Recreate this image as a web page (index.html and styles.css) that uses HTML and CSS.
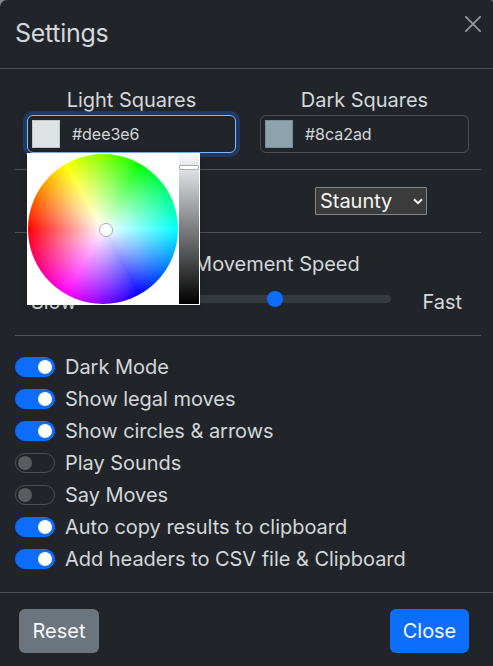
FILE: index.html
```
<!DOCTYPE html>
<html lang="en">
<head>
<meta charset="utf-8">
<title>Settings</title>
<link rel="stylesheet" href="styles.css">
</head>
<body>
<div class="modal">
  <header class="modal-header">
    <h5 class="modal-title">Settings</h5>
    <button class="btn-close" aria-label="Close">
      <svg viewBox="0 0 16 16" width="16" height="16"><path d="M.9.9l14.2 14.2M15.1.9L.9 15.1" fill="none" stroke="currentColor" stroke-width="1.8" stroke-linecap="round"/></svg>
    </button>
  </header>
  <main class="modal-body">
    <div class="colors">
      <div class="color-field">
        <label>Light Squares</label>
        <div class="color-input focused"><span class="swatch light"></span><span class="hex">#dee3e6</span></div>
        <div class="picker">
          <div class="wheel"><span class="cursor"></span></div>
          <div class="shade"><span class="handle"></span></div>
        </div>
      </div>
      <div class="color-field">
        <label>Dark Squares</label>
        <div class="color-input"><span class="swatch dark"></span><span class="hex">#8ca2ad</span></div>
      </div>
    </div>
    <hr>
    <div class="piece-row">
      <div class="select"><span>Staunty</span>
        <svg viewBox="0 0 10 7" width="10" height="7"><path d="M1 1.2l4 4 4-4" fill="none" stroke="currentColor" stroke-width="2"/></svg>
      </div>
    </div>
    <hr>
    <div class="speed-title">Piece Movement Speed</div>
    <div class="speed-row">
      <span class="slow">Slow</span>
      <div class="range"><span class="thumb"></span></div>
      <span class="fast">Fast</span>
    </div>
    <hr>
    <div class="switches">
      <label class="switch-row"><span class="switch on"></span><span>Dark Mode</span></label>
      <label class="switch-row"><span class="switch on"></span><span>Show legal moves</span></label>
      <label class="switch-row"><span class="switch on"></span><span>Show circles &amp; arrows</span></label>
      <label class="switch-row"><span class="switch"></span><span>Play Sounds</span></label>
      <label class="switch-row"><span class="switch"></span><span>Say Moves</span></label>
      <label class="switch-row"><span class="switch on"></span><span>Auto copy results to clipboard</span></label>
      <label class="switch-row"><span class="switch on"></span><span>Add headers to CSV file &amp; Clipboard</span></label>
    </div>
  </main>
  <footer class="modal-footer">
    <button class="btn secondary">Reset</button>
    <button class="btn primary">Close</button>
  </footer>
</div>
</body>
</html>
```
FILE: styles.css
```
* { box-sizing: border-box; }
body {
  margin: 0;
  background: #85888a;
  color: #d3d7db;
  font: 400 20px/30px Inter, "Liberation Sans", sans-serif;
  letter-spacing: -.03px;
}
.modal {
  display: flex;
  flex-direction: column;
  width: 493px;
  height: 666px;
  background: #212529;
  border-radius: 7px 3px 0 0;
  overflow: hidden;
}
.modal-header {
  display: flex;
  justify-content: space-between;
  height: 69px;
  padding: 15px 12px 0 15px;
  border-bottom: 1px solid #495057;
}
.modal-title { margin: 0; font-size: 25px; font-weight: 400; line-height: 37px; letter-spacing: -.3px; }
.btn-close { display: flex; height: 16px; margin: 1px 0 0; padding: 0; border: 0; background: none; color: #96989a; }
.modal-body { flex: 1; padding: 16px 12px 0 15px; }
hr { height: 1px; margin: 0; border: 0; background: #4f5357; }
.colors { display: flex; gap: 24px; height: 84px; padding-left: 12px; }
.color-field { position: relative; width: 209px; text-align: center; }
.color-field label { display: block; }
.color-input {
  display: flex;
  align-items: center;
  gap: 12px;
  height: 38px;
  padding-left: 4px;
  border: 1px solid #495057;
  border-radius: 6px;
  font-size: 16px;
}
.color-input.focused { border-color: #86b7fe; box-shadow: 0 0 0 4px #1d3a67; }
.swatch { width: 28px; height: 28px; border: 1px solid rgba(0, 0, 0, .12); }
.swatch.light { background: #dee3e6; }
.swatch.dark { background: #8ca2ad; }
.picker {
  position: absolute;
  z-index: 2;
  top: 68px;
  left: 0;
  display: flex;
  gap: 1px;
  width: 173px;
  height: 152px;
  padding: 1px;
  background: #fff;
  box-shadow: 0 0 8px rgba(0, 0, 0, .2);
}
.wheel {
  position: relative;
  width: 150px;
  height: 150px;
  border-radius: 50%;
  background: radial-gradient(circle closest-side, #fff, rgba(255, 255, 255, 0)),
    conic-gradient(from 270deg, #f00, #ff0, #0f0, #0ff, #00f, #f0f, #f00);
}
.cursor {
  position: absolute;
  left: 71px;
  top: 69px;
  width: 14px;
  height: 14px;
  border: 1px solid #aaa;
  border-radius: 50%;
  background: #f6fbff;
  box-shadow: inset 0 0 0 2px #fff;
}
.shade { position: relative; width: 20px; background: linear-gradient(#f6fbff, #000); }
.handle {
  position: absolute;
  top: 11px;
  left: 0;
  width: 20px;
  height: 5px;
  border: 1px solid #aaa;
  border-radius: 2px;
  background: #fff;
}
.piece-row { height: 62px; padding: 17px 0 0 300px; }
.select {
  display: flex;
  align-items: center;
  justify-content: space-between;
  width: 112px;
  height: 28px;
  padding: 0 3px 0 4px;
  border: 1px solid #858585;
  border-radius: 1px;
  background: #3b3b3b;
  color: #f4f4f4;
}
.speed-title { padding-top: 16px; text-align: center; }
.speed-row { display: flex; height: 56px; padding: 8px 19px 0 16px; }
.slow { width: 90px; }
.range { position: relative; flex: none; width: 270px; height: 8px; margin-top: 8px; border-radius: 4px; background: #343a40; }
.thumb { position: absolute; left: 146px; top: -4px; width: 16px; height: 16px; border-radius: 50%; background: #0d6efd; }
.fast { margin-left: auto; }
.switches { padding-top: 15px; }
.switch-row { display: flex; align-items: center; gap: 10px; height: 32px; white-space: nowrap; }
.switch {
  display: flex;
  align-items: center;
  width: 40px;
  height: 20px;
  padding: 0 2px;
  border: 1px solid #495057;
  border-radius: 10px;
}
.switch::before { content: ""; width: 14px; height: 14px; border-radius: 50%; background: #595c5f; }
.switch.on { justify-content: flex-end; border-color: #0d6efd; background: #0d6efd; }
.switch.on::before { background: #fff; }
.modal-footer {
  display: flex;
  justify-content: space-between;
  align-items: flex-start;
  height: 74px;
  padding: 16px 24px 0 19px;
  border-top: 1px solid #495057;
}
.btn { height: 44px; padding: 0; border: 0; border-radius: 6px; color: #f6f8fa; font: inherit; letter-spacing: inherit; }
.btn.secondary { width: 80px; background: #6c757d; }
.btn.primary { width: 79px; background: #0d6efd; }
```
